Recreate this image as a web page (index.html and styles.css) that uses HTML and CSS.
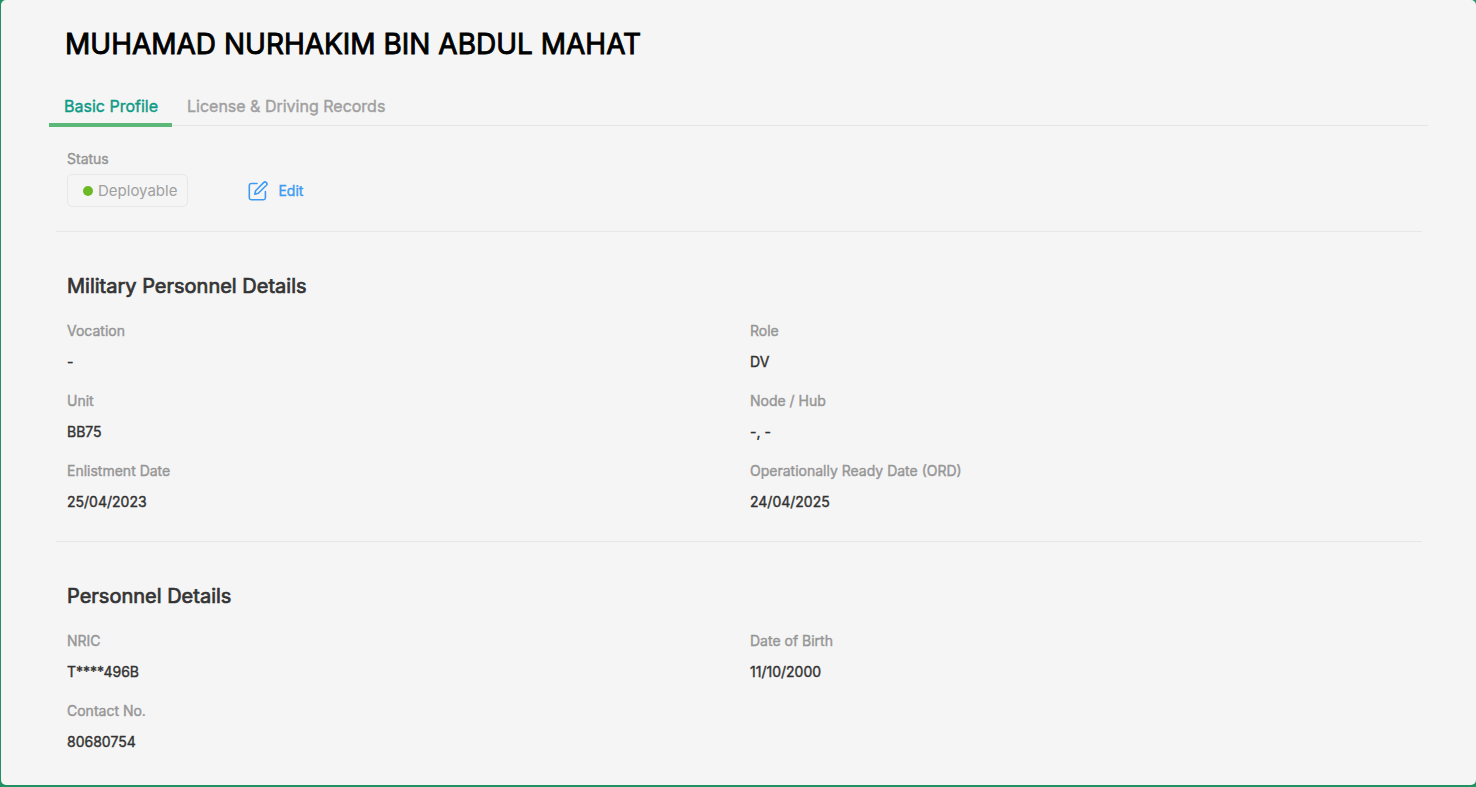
FILE: index.html
```html
<!DOCTYPE html>
<html lang="en">
<head>
<meta charset="utf-8">
<meta name="viewport" content="width=device-width, initial-scale=1">
<title>Personnel Profile</title>
<link rel="stylesheet" href="styles.css">
</head>
<body>
<main class="card">
  <h1 class="name">MUHAMAD NURHAKIM BIN ABDUL MAHAT</h1>
  <div class="tabs" role="tablist">
    <button class="tab tab-active" type="button" role="tab" aria-selected="true">Basic Profile</button>
    <button class="tab" type="button" role="tab" aria-selected="false">License &amp; Driving Records</button>
  </div>
  <section class="section status">
    <p class="label">Status</p>
    <div class="status-row">
      <span class="chip"><span class="dot"></span>Deployable</span>
      <button class="edit" type="button">
        <svg class="edit-icon" viewBox="0 0 20 20" fill="none" stroke="currentColor" stroke-width="1.6" stroke-linecap="round" stroke-linejoin="round" aria-hidden="true">
          <path d="M9 2.500H3.200A2 2 0 0 0 1.300 4.400V17A2 2 0 0 0 3.200 18.800H15.500A2 2 0 0 0 17.400 17V10.500"/>
          <path d="M15.600 1.600A1.900 1.900 0 0 1 18.400 4.300L10.300 12.300L6.800 13.200L7.600 9.700Z"/>
        </svg>
        Edit
      </button>
    </div>
  </section>
  <section class="section">
    <h2 class="heading">Military Personnel Details</h2>
    <dl class="fields">
      <div class="field"><dt class="label">Vocation</dt><dd class="value">-</dd></div>
      <div class="field"><dt class="label">Role</dt><dd class="value">DV</dd></div>
      <div class="field"><dt class="label">Unit</dt><dd class="value">BB75</dd></div>
      <div class="field"><dt class="label">Node / Hub</dt><dd class="value">-, -</dd></div>
      <div class="field"><dt class="label">Enlistment Date</dt><dd class="value">25/04/2023</dd></div>
      <div class="field"><dt class="label">Operationally Ready Date (ORD)</dt><dd class="value">24/04/2025</dd></div>
    </dl>
  </section>
  <section class="section">
    <h2 class="heading">Personnel Details</h2>
    <dl class="fields">
      <div class="field"><dt class="label">NRIC</dt><dd class="value">T****496B</dd></div>
      <div class="field"><dt class="label">Date of Birth</dt><dd class="value">11/10/2000</dd></div>
      <div class="field"><dt class="label">Contact No.</dt><dd class="value">80680754</dd></div>
    </dl>
  </section>
</main>
</body>
</html>
```

FILE: styles.css
```css
* {
  box-sizing: border-box;
}

body {
  margin: 0;
  min-height: 100vh;
  display: flex;
  padding: 0 0 2px 1px;
  background: #1f9163;
  font-family: Inter, "Liberation Sans", sans-serif;
  font-size: 14px;
  line-height: 20px;
}

h1, h2, p, dl, dd {
  margin: 0;
}

button {
  border: 0;
  background: none;
  font: inherit;
  cursor: pointer;
}

.card {
  flex: 1;
  padding: 24px 48px 4px;
  border-radius: 5px;
  background: #f5f5f5;
}

.name,
.tab,
.label,
.value,
.edit,
.heading {
  font-weight: 400;
  -webkit-text-stroke: 0.4px currentColor;
}

.name {
  padding-left: 16px;
  font-size: 28px;
  line-height: 40px;
  color: #000;
  -webkit-text-stroke-width: 0.9px;
}

.tabs {
  display: flex;
  margin-top: 24px;
  box-shadow: inset 0 -1px #e5e5e5;
}

.tab {
  height: 38px;
  padding: 0 14px 2px 15px;
  font-size: 16px;
  color: #a0a0a0;
}

.tab-active {
  height: 39px;
  margin-bottom: -1px;
  padding-bottom: 0;
  border-bottom: 4px solid #5cb878;
  color: #0d9a86;
}

.section {
  margin: 0 6px 0 7px;
  padding-bottom: 10px;
}

.section + .section {
  padding-top: 41px;
  border-top: 1px solid #e7e7e7;
}

.section.status {
  padding: 23px 11px 24px;
}

.status-row {
  display: flex;
  align-items: center;
  gap: 60px;
  margin-top: 5px;
}

.label {
  color: #969696;
}

.chip {
  display: flex;
  align-items: center;
  gap: 5px;
  height: 33px;
  padding: 0 10px 0 15px;
  border: 1px solid #e7e7e7;
  border-radius: 5px;
  font-size: 15px;
  color: #a0a0a0;
}

.dot {
  width: 10px;
  height: 10px;
  border-radius: 50%;
  background: #6cb926;
}

.edit {
  display: flex;
  align-items: center;
  gap: 10px;
  padding: 0;
  color: #3d9bf2;
}

.edit-icon {
  width: 20px;
  height: 20px;
}

.heading {
  padding: 0 11px;
  font-size: 20px;
  line-height: 26px;
  color: #333;
  -webkit-text-stroke-width: 0.7px;
}

.fields {
  display: grid;
  grid-template-columns: 1fr 1fr;
  margin-top: 22px;
}

.field {
  padding: 0 11px;
  height: 70px;
}

.value {
  margin-top: 11px;
  color: #333;
}
```
